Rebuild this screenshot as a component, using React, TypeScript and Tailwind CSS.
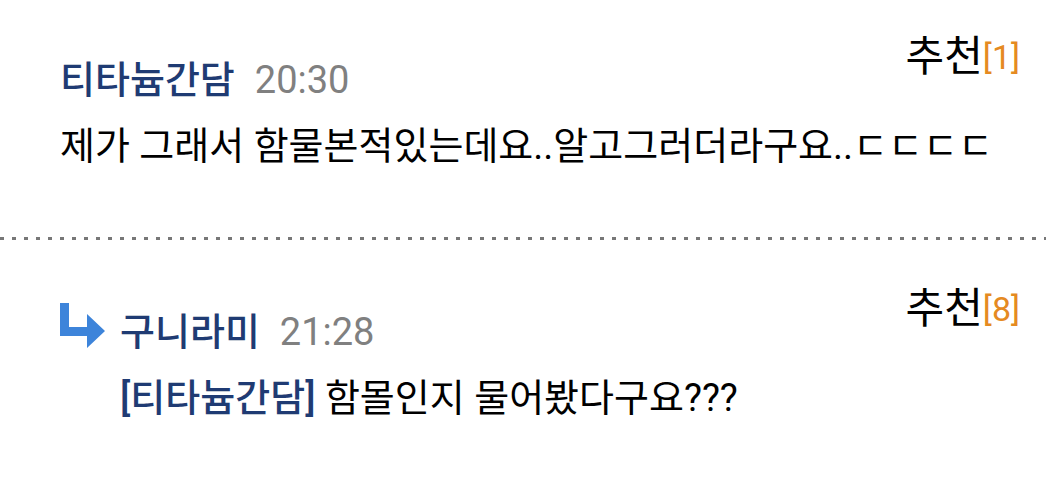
import * as React from "react";

type Comment = {
  id: number;
  author: string;
  time: string;
  votes: number;
  body: string;
  replyTo?: string;
};

const COMMENTS: Comment[] = [
  { id: 1, author: "티타늄간담", time: "20:30", votes: 1, body: "제가 그래서 함물본적있는데요..알고그러더라구요..ㄷㄷㄷㄷ" },
  { id: 2, author: "구니라미", time: "21:28", votes: 8, body: "함몰인지 물어봤다구요???", replyTo: "티타늄간담" },
];

function ReplyArrow() {
  return (
    <svg viewBox="0 0 46 46" className="h-[46px] w-[46px]" aria-hidden="true">
      <path d="M0 1H9V25H27V12L45 29L27 46V34H0Z" fill="#3d84da" />
    </svg>
  );
}

// Dotted separator drawn between two comments
function Divider() {
  return (
    <div
      role="separator"
      className="mb-3 h-[3px] bg-[repeating-linear-gradient(to_right,#777_0_4px,transparent_4px_12px)]"
    />
  );
}

function CommentRow({ comment }: { comment: Comment }) {
  return (
    <div className="flex items-start pt-9 pr-[26px] pb-[67px] pl-[60px]">
      {comment.replyTo && (
        <div className="w-[60px] shrink-0 pt-[14px]">
          <ReplyArrow />
        </div>
      )}
      <div className="min-w-0 flex-1">
        <div className="flex items-start justify-between">
          <div className="flex items-center gap-5 pt-5">
            <span className="font-medium text-[#1f3b73]">{comment.author}</span>
            <time className="text-[#808080]">{comment.time}</time>
          </div>
          <button type="button" className="flex items-center pt-px text-[42px] leading-10">
            추천<span className="text-[34px] text-[#e58a22]">[{comment.votes}]</span>
          </button>
        </div>
        <p className="pt-[18px]">
          {comment.replyTo && <span className="font-medium text-[#1f3b73]">[{comment.replyTo}] </span>}
          {comment.body}
        </p>
      </div>
    </div>
  );
}

export default function App() {
  return (
    <ul className="bg-white font-['Roboto','Noto_Sans_CJK_KR',sans-serif] text-[38px] leading-[48px] text-black">
      {COMMENTS.map((c, i) => (
        <li key={c.id}>
          {i > 0 && <Divider />}
          <CommentRow comment={c} />
        </li>
      ))}
    </ul>
  );
}
